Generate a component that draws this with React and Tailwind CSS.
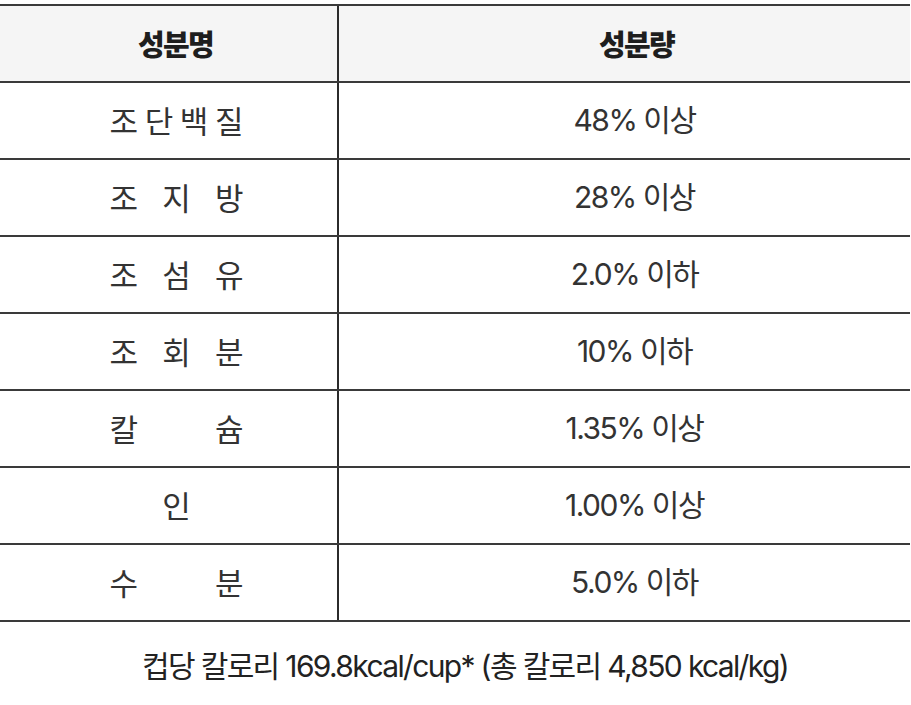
const rows = [
  { name: ['조', '단', '백', '질'], value: '48% 이상' },
  { name: ['조', '지', '방'], value: '28% 이상' },
  { name: ['조', '섬', '유'], value: '2.0% 이하' },
  { name: ['조', '회', '분'], value: '10% 이하' },
  { name: ['칼', '슘'], value: '1.35% 이상' },
  { name: ['인'], value: '1.00% 이상' },
  { name: ['수', '분'], value: '5.0% 이하' },
];

const kr = { fontFamily: '"Noto Sans CJK KR", "Noto Sans", sans-serif' };
const num = { fontFamily: 'Inter, "Noto Sans CJK KR", sans-serif' };

export default function App() {
  return (
    <div className="w-[911px] h-[705px] bg-white text-[#333]" style={kr}>
      <div className="pt-1 pr-px">
        {/* 표 */}
        <div className="border-t-2 border-[#3a3a3a]">
          {/* 머리글 */}
          <div className="flex h-[77px] bg-[#f5f5f5] border-b-2 border-[#3a3a3a]">
            <div className="w-[337px] flex items-center justify-center pl-[14px] text-[29px] font-black text-[#1e1e1e] tracking-[-0.06em]">
              성분명
            </div>
            <div className="w-[2px] bg-[#2b2b2b]" />
            <div className="flex-1 flex items-center justify-center pl-6 text-[29px] font-black text-[#1e1e1e] tracking-[-0.06em]">
              성분량
            </div>
          </div>

          {/* 본문 */}
          {rows.map((row, i) => (
            <div key={i} className="flex h-[77px] border-b-2 border-[#3a3a3a]">
              <div className="w-[337px] flex items-center justify-center pl-4">
                <div
                  className={
                    row.name.length > 1
                      ? 'w-[134px] flex justify-between text-[31px]'
                      : 'w-[134px] flex justify-center text-[31px]'
                  }
                >
                  {row.name.map((ch, j) => (
                    <span key={j}>{ch}</span>
                  ))}
                </div>
              </div>
              <div className="w-[2px] bg-[#2b2b2b]" />
              <div
                className="flex-1 flex items-center justify-center pl-5 text-[30px] tracking-[-0.05em]"
                style={num}
              >
                {row.value}
              </div>
            </div>
          ))}
        </div>

        {/* 칼로리 */}
        <div
          className="h-[88px] flex items-center justify-center pl-5 text-[30px] tracking-[-0.055em] text-[#222]"
          style={num}
        >
          컵당 칼로리 169.8kcal/cup* (총 칼로리 4,850 kcal/kg)
        </div>
      </div>
    </div>
  );
}
